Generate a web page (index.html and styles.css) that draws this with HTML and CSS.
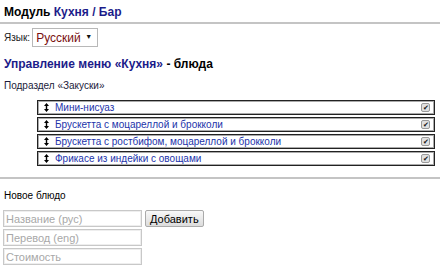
FILE: index.html
```html
<!DOCTYPE html>
<html lang="ru">
<head>
<meta charset="UTF-8" />
<meta name="viewport" content="width=device-width, initial-scale=1.0"/>
<title>Кухня / Бар</title>
<link rel="stylesheet" href="styles.css">
</head>
<body>

<h1 class="module-title">Модуль <span class="accent">Кухня / Бар</span></h1>
<hr class="rule">

<div class="lang-row">
<label for="langSelect">Язык:</label>
<span class="select-wrap">
<select id="langSelect">
<option>Русский</option>
<option>English</option>
</select>
</span>
</div>

<h2 class="section-title"><span class="accent">Управление меню «Кухня»</span> - блюда</h2>
<p class="subsection">Подраздел «Закуски»</p>

<ul class="dish-list">
<li class="dish"><svg class="handle" width="5" height="9" viewBox="0 0 5 9"><path d="M2.5 0 L5 3 H3.2 V6 H5 L2.5 9 L0 6 H1.8 V3 H0 Z"/></svg><span class="dish-name">Мини-нисуаз</span><span class="check">&#x2714;</span></li>
<li class="dish"><svg class="handle" width="5" height="9" viewBox="0 0 5 9"><path d="M2.5 0 L5 3 H3.2 V6 H5 L2.5 9 L0 6 H1.8 V3 H0 Z"/></svg><span class="dish-name">Брускетта с моцареллой и брокколи</span><span class="check">&#x2714;</span></li>
<li class="dish"><svg class="handle" width="5" height="9" viewBox="0 0 5 9"><path d="M2.5 0 L5 3 H3.2 V6 H5 L2.5 9 L0 6 H1.8 V3 H0 Z"/></svg><span class="dish-name">Брускетта с ростбифом, моцареллой и брокколи</span><span class="check">&#x2714;</span></li>
<li class="dish"><svg class="handle" width="5" height="9" viewBox="0 0 5 9"><path d="M2.5 0 L5 3 H3.2 V6 H5 L2.5 9 L0 6 H1.8 V3 H0 Z"/></svg><span class="dish-name">Фрикасе из индейки с овощами</span><span class="check">&#x2714;</span></li>
</ul>

<hr class="rule rule-low">

<p class="new-title">Новое блюдо</p>
<form class="new-dish">
<div class="field-row">
<input type="text" placeholder="Название (рус)">
<button type="button">Добавить</button>
</div>
<input type="text" placeholder="Перевод (eng)">
<input type="text" placeholder="Стоимость">
</form>

</body>
</html>
```

FILE: styles.css
```css
* { box-sizing: border-box; }
body {
margin: 0;
padding: 5px 0 0 0;
background-color: #fff;
color: #000;
font-family: 'Liberation Sans', Arial, sans-serif;
font-size: 10px;
}
.accent { color: #1c1c8a; }
.module-title {
font-size: 12px;
font-weight: bold;
margin: 0 4px;
line-height: 14px;
}
.rule {
border: none;
border-top: 2px solid #c4c4c4;
margin: 3px 0 0 0;
}
.lang-row {
display: flex;
align-items: center;
gap: 2px;
margin: 4px 4px 0;
}
.lang-row label { color: #222; }
.select-wrap {
position: relative;
display: inline-block;
}
.select-wrap select {
appearance: none;
-webkit-appearance: none;
font-family: 'Liberation Sans', Arial, sans-serif;
font-size: 12px;
color: #7a1010;
background: #fff;
border: 1px solid #b8b8b8;
border-radius: 0;
padding: 1px 0 1px 3px;
height: 19px;
width: 66px;
}
.select-wrap::after {
content: "\25BC";
position: absolute;
right: 6px;
top: 5px;
font-size: 7px;
color: #111;
pointer-events: none;
}
.section-title {
font-size: 12px;
font-weight: bold;
margin: 10px 4px 0;
line-height: 14px;
}
.subsection {
margin: 9px 4px 0;
color: #1a1a3a;
}
.dish-list {
list-style: none;
margin: 9px 5px 0 37px;
padding: 0;
display: flex;
flex-direction: column;
gap: 2px;
}
.dish {
display: flex;
align-items: center;
height: 15px;
border: 1px solid #222;
box-shadow: 0 0 0 1px #aaa inset;
padding: 0 4px 0 6px;
font-size: 10px;
}
.handle {
fill: #000;
margin-right: 6px;
}
.dish-name {
flex: 1;
color: #2233aa;
}
.check {
display: inline-flex;
align-items: center;
justify-content: center;
width: 9px;
height: 9px;
border: 1px solid #999;
background: #e0e0e0;
border-radius: 2px;
font-size: 7px;
color: #111;
}
.rule-low { margin-top: 11px; }
.new-title {
margin: 11px 4px 0;
}
.new-dish {
display: flex;
flex-direction: column;
gap: 2px;
margin: 9px 3px 0;
}
.field-row {
display: flex;
gap: 3px;
align-items: center;
}
.new-dish input {
width: 139px;
height: 17px;
border: 1px solid #c8c8c8;
box-shadow: 0 0 0 1px #eee inset;
font-family: 'Liberation Sans', Arial, sans-serif;
font-size: 11px;
padding: 0 2px;
}
.new-dish input::placeholder { color: #a8a8a8; }
.new-dish button {
font-family: 'Liberation Sans', Arial, sans-serif;
font-size: 11px;
height: 17px;
padding: 0 4px;
border: 1px solid #aaa;
border-radius: 2px;
background: linear-gradient(#f8f8f8, #dcdcdc);
color: #000;
}
```
